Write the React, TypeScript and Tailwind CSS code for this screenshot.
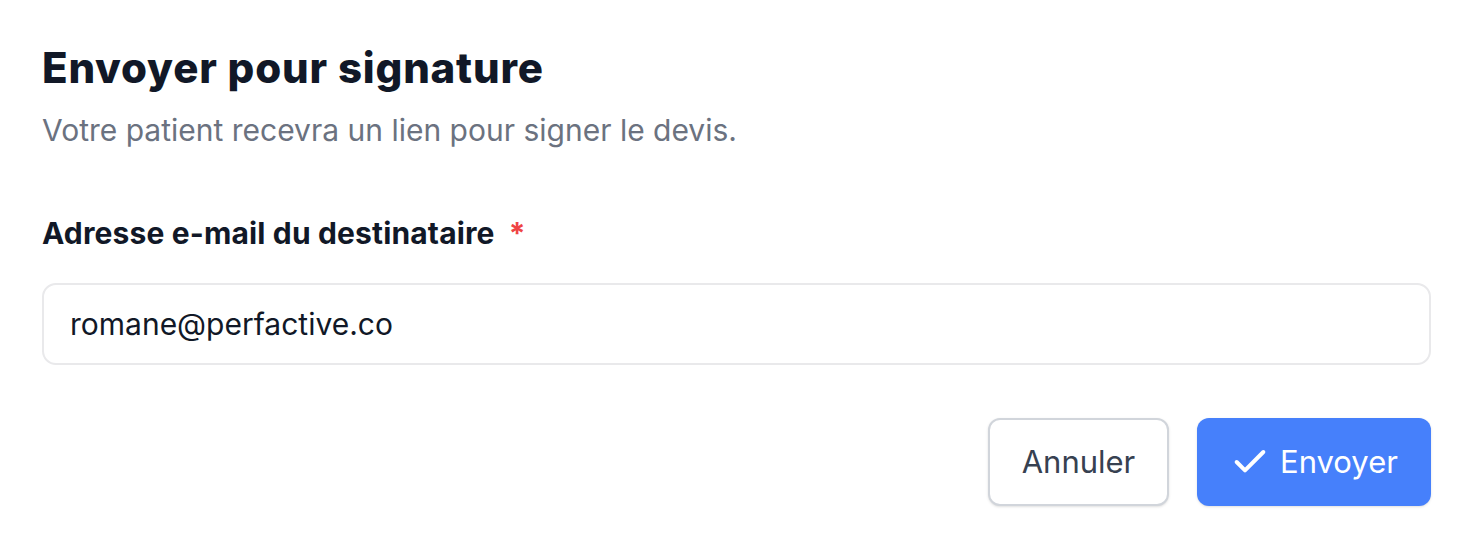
import { Check } from 'lucide-react';

export default function App() {
  return (
    <div className="min-h-screen bg-white font-['Inter',sans-serif]">
      <div className="pl-[42px] pr-[41px] pt-[44px]">
        <h1 className="text-[42px] leading-[48px] font-extrabold text-[#111827] tracking-[0.8px]">
          Envoyer pour signature
        </h1>
        <p className="mt-[18px] text-[30px] leading-[40px] text-[#6b7280]">
          Votre patient recevra un lien pour signer le devis.
        </p>

        <div className="mt-[63px]">
          <label className="flex items-center text-[30px] leading-[40px] font-bold text-[#111827] tracking-[0.15px]">
            Adresse e-mail du destinataire
            <span className="ml-[14px] text-[#ef4444]">*</span>
          </label>
          <input
            type="email"
            defaultValue="romane@perfactive.co"
            className="mt-[30px] block w-full h-[82px] rounded-[14px] border-2 border-[#e9e9eb] px-[26px] text-[30px] text-[#111827] outline-none"
          />
        </div>

        <div className="mt-[53px] flex justify-end gap-[28px]">
          <button className="h-[88px] w-[181px] rounded-[12px] border-2 border-[#d1d5db] bg-white text-[31px] text-[#374151] shadow-sm">
            Annuler
          </button>
          <button className="flex h-[88px] w-[234px] items-center justify-center gap-[10px] rounded-[12px] bg-[#4680fb] text-[31px] text-white shadow-sm">
            <Check className="h-[40px] w-[40px]" strokeWidth={2.4} />
            Envoyer
          </button>
        </div>
      </div>
    </div>
  );
}
